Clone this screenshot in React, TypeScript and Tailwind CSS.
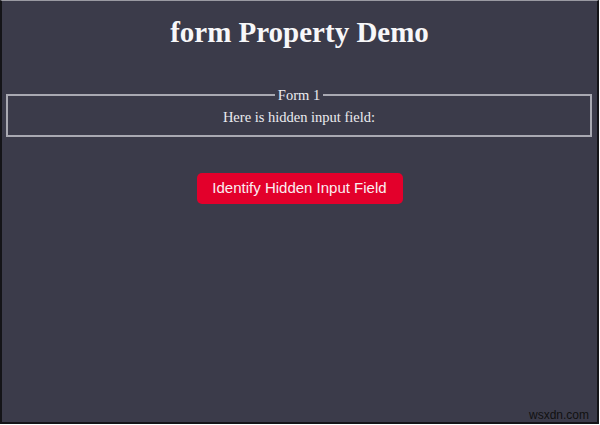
export default function App() {
  return (
    <div className="w-[600px] h-[425px] bg-white">
      <div className="relative w-[599px] h-[424px] border-l-2 border-r-2 border-b-2 border-t border-[#141418] border-t-[#9a9aa2] bg-[#3b3b4a] font-['Liberation_Serif',serif]">
        <h1 className="pt-[14px] text-center text-[29px] leading-[34px] font-bold text-[#f7f7f9]">
          form Property Demo
        </h1>
        <fieldset className="mt-[38px] ml-1 mr-[5px] border-2 border-[#a9a9b2] px-2 pb-[10px] pt-[6px] text-center text-[14.5px] leading-4 text-[#ececf0]">
          <legend className="mx-auto px-[3px]">Form 1</legend>
          <p>Here is hidden input field:</p>
        </fieldset>
        <div className="mt-[36px] flex justify-center">
          <button
            type="button"
            className="h-[31px] w-[206px] rounded-[5px] bg-[#e3002b] font-['Liberation_Sans',Arial,sans-serif] text-[15px] text-[#fbeef1]"
          >
            Identify Hidden Input Field
          </button>
        </div>
        <span className="absolute bottom-0 right-[8px] font-['Liberation_Sans',Arial,sans-serif] text-[12px] leading-[14px] text-[#111]">
          wsxdn.com
        </span>
      </div>
    </div>
  );
}
